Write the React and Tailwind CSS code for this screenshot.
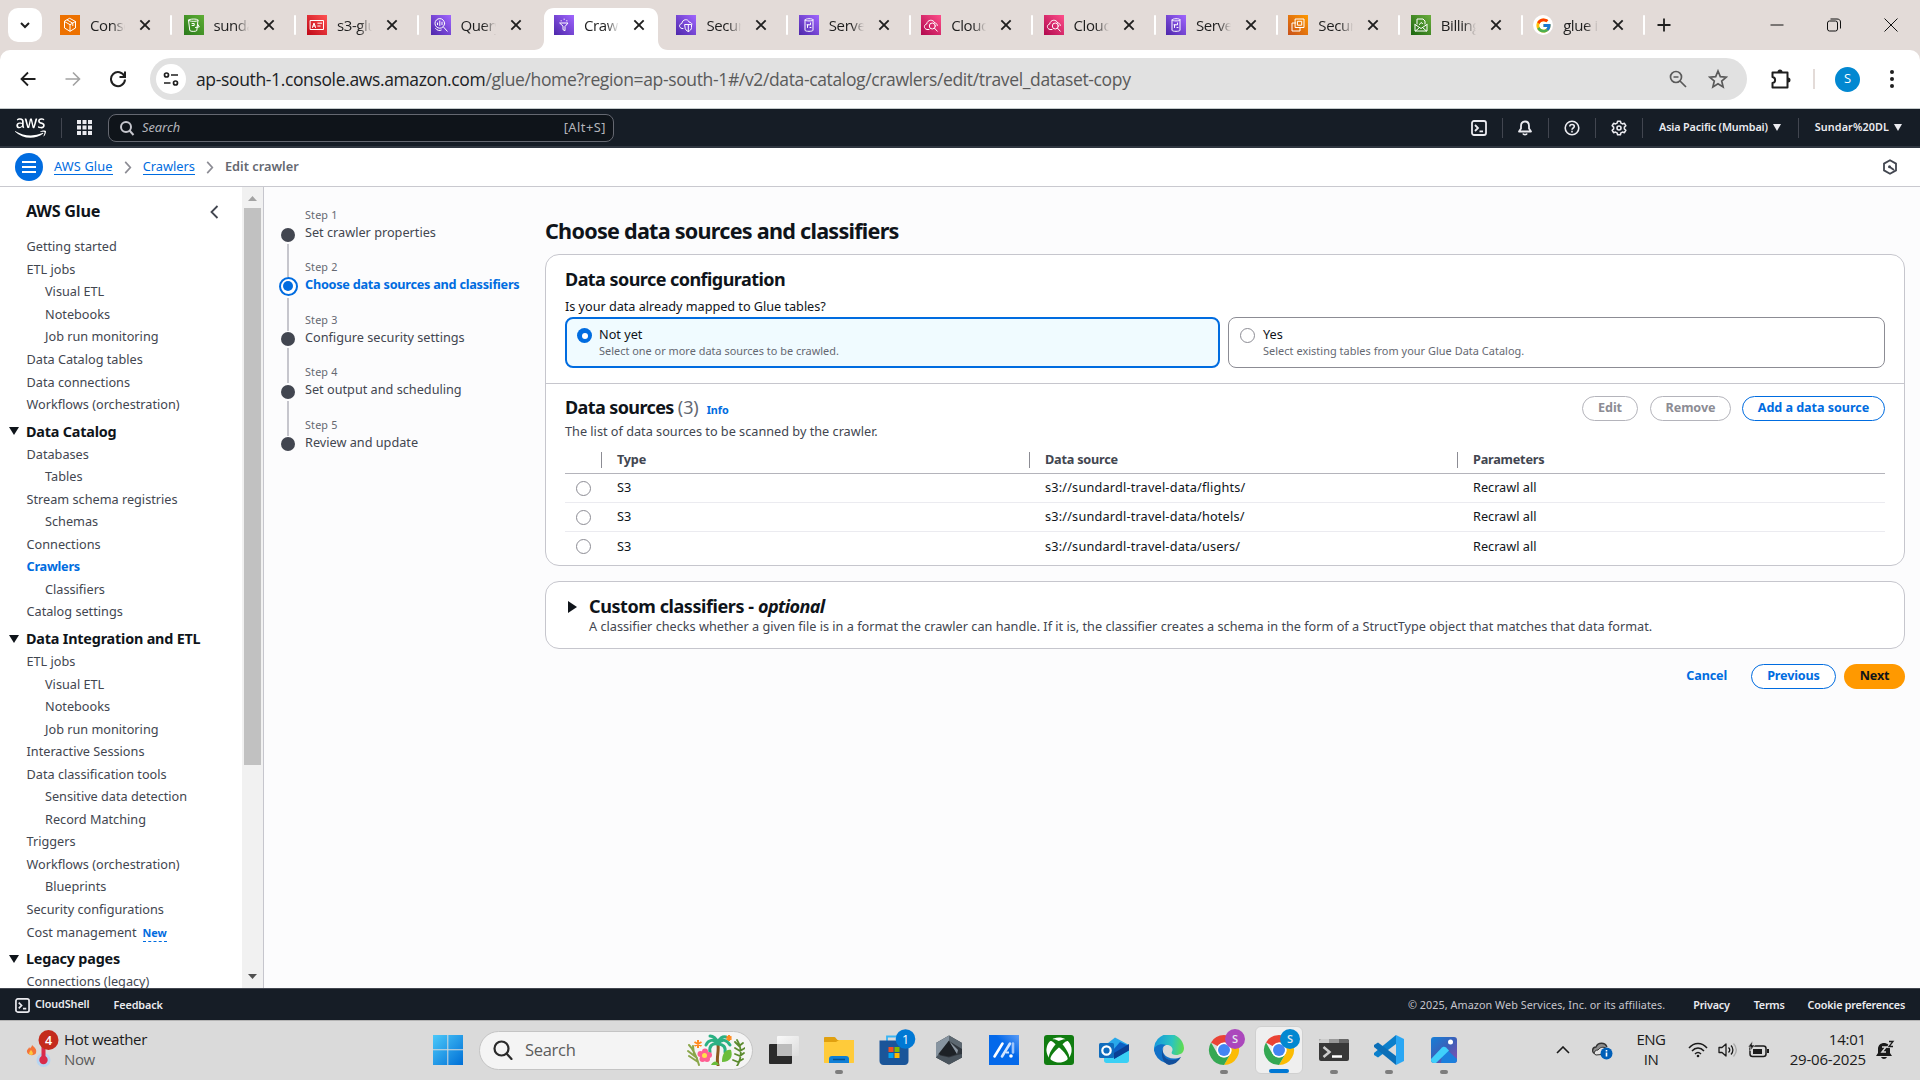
import React from 'react';
import { FaAws, FaXbox } from 'react-icons/fa';
import { FcGoogle } from 'react-icons/fc';

const favs = {
  console: ['#ed7100', '#ed7100', <path key="a" d="M10 3.5 15.5 6.5V13L10 16.3 4.5 13V6.5ZM4.5 6.5 10 9.7 15.5 6.5M10 9.7V16M7.2 5l5.6 3.2v2.5" />],
  bucket: ['#2a7a1b', '#5fae35', <path key="a" d="M4.5 5.2C4.5 3.6 14 3.6 14 5.2S4.5 6.8 4.5 5.2ZM4.5 5.2 5.8 15.5c.5 1.2 6.4 1.2 7 0L14 5.2M8 8.5h2.2v2H8M11.5 12.5l3.8-.6-1.4-2.4" />],
  s3glue: ['#bf0816', '#ff5252', <path key="a" d="M3.5 5.5h13v9h-13ZM5.5 12.5 7 8l1.5 4.5M6 11h2M10.8 8.2h3.8M10.8 11h2.3" />],
  athena: ['#4d27aa', '#a166ff', <g key="a"><circle cx="8.8" cy="8.4" r="4.8" /><path d="M6.5 9.7V8M8.8 10.5V6M11 9.7V7.2M12.5 12l3.7 4.2M4.6 13.5c1.6 2.2 4 2.4 5.6 1.6" /></g>],
  glue: ['#4d27aa', '#a166ff', <g key="a"><path d="M6 8h8l-3 3.500v4.200l-2-1v-3.200ZM7 5.800h.4M10 4.200h.4M12.600 5.800h.4" /></g>],
  lake: ['#4d27aa', '#a166ff', <path key="a" d="M7 13.5H6c-3.4-.8-3-4.6-.2-5C6.500 4 12 3.400 13.200 7.200c1.500.100 2.500.800 2.800 1.800M9 9.500h6.500v3c0 2-1.500 3.200-3.200 4-1.800-.8-3.300-2-3.300-4ZM12.300 9.500v7" />],
  redshift: ['#4d27aa', '#a166ff', <path key="a" d="M6 4.800C6 3.300 14 3.300 14 4.800S6 6.300 6 4.800V15.200c0 1.500 8 1.500 8 0V4.800M8.500 12.500V9.800h3V8M8 9.800h1M11 12.500h1" />],
  watch: ['#b0084d', '#ff4f8b', <g key="a"><path d="M8 14.500H6c-3.600-.8-3.200-5-.3-5.500.7-4.600 6.600-5 8-1 1.500 0 2.600 1 2.600 2.500" /><circle cx="11.300" cy="11" r="3" /><path d="m13.500 13.200 2.800 3" /></g>],
  ec2: ['#c8511b', '#ff9900', <path key="a" d="M7.500 4h8.500v8.500H7.500ZM9.800 6.300h3.900v3.900H9.800ZM7.500 8H4v8h8v-3.500" />],
  billing: ['#1b660f', '#6cae3e', <path key="a" d="M6 9V4h6l2 2v3M4 9.500V16h12V9.500M4 9.500l6 4 6-4M4.500 16 8.500 12.500M15.500 16l-4-3.500M8.500 9.500 10 7.500l1.500 1" />],
};

function Fav({ k }) {
  if (k === 'google') return <span className="flex size-5 shrink-0 items-center justify-center rounded-full bg-white"><FcGoogle size={17} /></span>;
  const [a, b, g] = favs[k];
  return (
    <svg viewBox="0 0 20 20" className="size-5 shrink-0">
      <defs><linearGradient id={'g' + k} x1="0" y1="1" x2="1" y2="0"><stop stopColor={a} /><stop offset="1" stopColor={b} /></linearGradient></defs>
      <rect width="20" height="20" fill={`url(#g${k})`} />
      <g fill="none" stroke="#fff" strokeWidth="1" strokeLinejoin="round" strokeLinecap="round">{g}</g>
    </svg>
  );
}

const tabs = [
  ['console', 'Conso'], ['bucket', 'sunda'], ['s3glue', 's3-glu'], ['athena', 'Query'], ['glue', 'Crawl'],
  ['lake', 'Secur'], ['redshift', 'Serve'], ['watch', 'Cloud'], ['watch', 'Cloud'], ['redshift', 'Serve'],
  ['ec2', 'Secur'], ['billing', 'Billing'], ['google', 'glue i'],
];

function Tab({ k, label, i }) {
  const active = i === 4;
  return (
    <div className={'relative flex h-[42px] shrink-0 items-center pl-[10px] ' + (i < 4 ? 'w-[123.5px]' : 'w-[122.4px]')}>
      {active && (
        <svg className="absolute -left-2.5 top-0 h-[42px] w-[134px]" viewBox="0 0 134 42">
          <path d="M0 42C6 42 10 38 10 32V10C10 4 14 0 20 0h94c6 0 10 4 10 10v22c0 6 4 10 10 10Z" fill="#fff" />
        </svg>
      )}
      <div className="relative flex h-[34px] items-center self-start">
        <Fav k={k} />
        <span className="ml-2.5 block w-[37px] overflow-hidden whitespace-nowrap text-[15px] tracking-[-0.4px] text-[#1f1f1f] [mask-image:linear-gradient(to_right,#000_60%,transparent_95%)]">{label}</span>
        <svg viewBox="0 0 12 12" className="ml-[11px] size-3.5"><path d="m2 2 8 8M10 2l-8 8" stroke="#1f1f1f" strokeWidth="1.600" /></svg>
      </div>
      {i !== 3 && !active && <span className="absolute left-[120px] top-[7px] h-5 w-[2px] rounded bg-white" />}
    </div>
  );
}

function Chrome() {
  return (
    <header className="bg-[#e3dbd8] font-['Open_Sans',sans-serif]">
      <div className="flex h-[50px] items-end">
        <button className="mb-[8px] ml-2 flex h-[34px] w-[34px] items-center justify-center rounded-[10px] bg-white">
          <svg viewBox="0 0 14 14" className="size-3.5"><path d="m3 5 4 4 4-4" fill="none" stroke="#1f1f1f" strokeWidth="2" /></svg>
        </button>
        <div className="ml-2 flex">
          {tabs.map(([k, l], i) => <Tab key={i} k={k} label={l} i={i} />)}
        </div>
        <svg viewBox="0 0 14 14" className="mb-[18px] ml-[11px] size-3.5"><path d="M7 .5v13M.5 7h13" stroke="#1f1f1f" strokeWidth="1.800" /></svg>
        <div className="mb-[18px] ml-auto flex items-center gap-[43px] pr-[22px]">
          <svg viewBox="0 0 14 14" className="size-3.5"><path d="M.5 7h13" stroke="#111" /></svg>
          <svg viewBox="0 0 14 14" className="size-3.5" fill="none" stroke="#111"><rect x=".5" y="3" width="10" height="10" rx="2" /><path d="M3.500 1h6.500c2 0 3.500 1 3.500 3v6.500" /></svg>
          <svg viewBox="0 0 14 14" className="size-3.5"><path d="m.5.5 13 13M13.500.5l-13 13" stroke="#111" /></svg>
        </div>
      </div>
      <div className="flex h-[59px] items-center rounded-t-[10px] border-b border-[#c4cacb] bg-white">
        <svg viewBox="0 0 16 16" className="ml-[20px] size-4" fill="none" stroke="#1f1f1f" strokeWidth="1.800"><path d="M15.500 8H2M8 1.500 1.500 8 8 14.500" /></svg>
        <svg viewBox="0 0 16 16" className="ml-[29px] size-4" fill="none" stroke="#a2a2a2" strokeWidth="1.600"><path d="M.5 8H14M8 1.500 14.500 8 8 14.500" /></svg>
        <svg viewBox="0 0 18 18" className="ml-[28px] size-[18px]" fill="none" stroke="#1f1f1f" strokeWidth="2"><path d="M15.500 6.500A7 7 0 1 0 16 9.500" /><path d="M16 1.500V7h-5.500" /></svg>
        <div className="ml-[23px] flex h-[42px] w-[1597px] items-center rounded-full bg-[#e1e1e1] pl-1.5">
          <span className="flex size-[30px] items-center justify-center rounded-full bg-white">
            <svg viewBox="0 0 16 16" className="size-4" fill="none" stroke="#1f1f1f" strokeWidth="1.700"><circle cx="3.500" cy="4" r="2" /><path d="M8 4h7M1 12h6.500" /><circle cx="12.500" cy="12" r="2" /></svg>
          </span>
          <span className="ml-[10px] whitespace-nowrap text-[17.500px] tracking-[-0.36px] text-[#5a5a5a]"><span className="text-[#202124]">ap-south-1.console.aws.amazon.com</span>/glue/home?region=ap-south-1#/v2/data-catalog/crawlers/edit/travel_dataset-copy</span>
          <svg viewBox="0 0 18 18" className="ml-auto size-[18px]" fill="none" stroke="#5a5a5a" strokeWidth="1.700"><circle cx="7" cy="7" r="5.500" /><path d="m11 11 6 6M4.500 7h5" /></svg>
          <svg viewBox="0 0 20 20" className="ml-[21px] mr-[19px] size-5" fill="none" stroke="#5a5a5a" strokeWidth="1.700"><path d="m10 2 2.300 5.600 6 .5-4.600 3.900 1.400 5.900L10 14.700 4.900 17.900 6.300 12 1.700 8.100l6-.5Z" /></svg>
        </div>
        <svg viewBox="0 0 22 22" className="ml-[23px] size-[22px]" fill="none" stroke="#1f1f1f" strokeWidth="2"><path d="M2.500 4.500H17.500V19.500H2.500V15c3.500-.5 3.500-5.500 0-6Z" strokeLinejoin="round" /><path d="M7.500 4a2.500 2.500 0 0 1 5 0ZM18 9.500a2.500 2.500 0 0 1 0 5Z" fill="#1f1f1f" stroke="none" /></svg>
        <span className="ml-[21px] h-5 w-[2px] bg-[#e3dbd8]" />
        <span className="ml-[20px] flex size-[25px] items-center justify-center rounded-full bg-[#0288d1] text-[13px] text-white">S</span>
        <svg viewBox="0 0 4 18" className="ml-[30px] h-[18px] w-1" fill="#1f1f1f"><circle cx="2" cy="2" r="2" /><circle cx="2" cy="9" r="2" /><circle cx="2" cy="16" r="2" /></svg>
      </div>
    </header>
  );
}

function ShellIcon({ className }) {
  return <svg viewBox="0 0 16 16" className={className} fill="none" stroke="currentColor" strokeWidth="1.800"><rect x="1" y="1" width="14" height="14" rx="2" /><path d="m4 5 3 3-3 3M8.500 11.300H12" /></svg>;
}
const Bar = ({ className }) => <span className={'h-5 w-px bg-[#424650] ' + className} />;
const Caret = ({ className }) => <svg viewBox="0 0 8 7" className={'h-[7px] w-2 ' + className} fill="currentColor"><path d="M0 0h8L4 7Z" /></svg>;

function AwsNav() {
  return (
    <nav className="flex h-[39px] items-center border-b-2 border-[#2f3640] bg-[#161d26] text-[#ebebf0]">
      <FaAws className="ml-[15px] h-[26px] w-[31px] text-white" preserveAspectRatio="none" />
      <Bar className="ml-[15px]" />
      <svg viewBox="0 0 15 15" className="ml-[15px] size-[15px]" fill="currentColor">
        {[0, 5.500, 11].map((y) => [0, 5.500, 11].map((x) => <rect key={x + '-' + y} x={x} y={y} width="4" height="4" />))}
      </svg>
      <div className="ml-4 flex h-[28px] w-[506px] items-center rounded-lg border border-[#656871] bg-[#0f141a] px-[10px]">
        <svg viewBox="0 0 16 16" className="size-4" fill="none" stroke="#c6c6cd" strokeWidth="2"><circle cx="7" cy="7" r="5" /><path d="m10.500 10.500 4 4.500" /></svg>
        <span className="ml-[7px] pt-px text-[12.800px] italic tracking-[0px] text-[#b4b4bb]">Search</span>
        <span className="-mr-[3px] ml-auto pt-px text-[12.800px] tracking-[0.5px] text-[#b4b4bb]">[Alt+S]</span>
      </div>
      <ShellIcon className="ml-auto size-4" />
      <Bar className="ml-[15px]" />
      <svg viewBox="0 0 16 16" className="ml-[14px] size-4" fill="none" stroke="currentColor" strokeWidth="1.800"><path d="M8 1.500c3 0 4 2 4 4.500v2.500l2 3H2l2-3V6c0-2.500 1-4.500 4-4.500Z" strokeLinejoin="round" /><path d="M6 13.500c.5 1.500 3.500 1.500 4 0" /></svg>
      <Bar className="ml-[15px]" />
      <svg viewBox="0 0 16 16" className="ml-[15px] size-4" fill="none" stroke="currentColor" strokeWidth="1.600"><circle cx="8" cy="8" r="6.800" /><path d="M5.800 6.500C5.800 3.700 10.300 3.900 10.300 6.500 10.300 8 8 8 8 9.800M8 10.800v1.600" /></svg>
      <Bar className="ml-[15px]" />
      <svg viewBox="0 0 16 16" className="ml-[15px] size-4" fill="none" stroke="currentColor" strokeWidth="1.600"><path d="M6.600 1.200h2.800l.5 1.900 1.600.8 1.900-.6 1.400 2.400-1.400 1.400v1.800l1.400 1.400-1.400 2.400-1.900-.6-1.600.8-.5 1.900H6.600l-.5-1.900-1.600-.8-1.900.6-1.400-2.400L2.600 8.900V7.100L1.200 5.700l1.400-2.400 1.900.6 1.600-.8Z" strokeLinejoin="round" /><circle cx="8" cy="8" r="2" /></svg>
      <Bar className="ml-[15px]" />
      <span className="ml-4 text-[10.800px] font-semibold tracking-[-0.15px]">Asia Pacific (Mumbai)</span>
      <Caret className="ml-[5px]" />
      <Bar className="ml-[17px]" />
      <span className="ml-4 text-[10.800px] font-semibold tracking-[0.1px]">Sundar%20DL</span>
      <Caret className="ml-[5px] mr-[18px]" />
    </nav>
  );
}

const Chev = ({ className }) => <svg viewBox="0 0 8 14" className={'h-[13px] w-2 ' + className} fill="none" stroke="#8c8c94" strokeWidth="1.800"><path d="m1 1 5.500 6L1 13" /></svg>;

function Crumbs() {
  return (
    <div className="flex h-[39px] items-center border-b border-[#c9c9cf] bg-white text-[12.800px]">
      <span className="ml-[15px] flex size-7 items-center justify-center rounded-full bg-[#006ce0]">
        <svg viewBox="0 0 14 12" className="h-3 w-3.5" stroke="#fff" strokeWidth="1.800"><path d="M0 1h14M0 6h14M0 11h14" /></svg>
      </span>
      <a className="-mt-[2px] ml-[11px] border-b border-[#006ce0] leading-[16px] tracking-[0.12px] text-[#006ce0]">AWS Glue</a>
      <Chev className="ml-[11px]" />
      <a className="-mt-[2px] ml-[11px] border-b border-[#006ce0] leading-[16px] text-[#006ce0]">Crawlers</a>
      <Chev className="ml-[11px]" />
      <span className="-mt-[1px] ml-[11px] font-semibold text-[#656871]">Edit crawler</span>
      <svg viewBox="0 0 16 16" className="ml-auto mr-[22px] size-4" fill="none" stroke="#424650" strokeWidth="1.800"><path d="m8 1.200 6 3.400v6.800l-6 3.400-6-3.400V4.600Z" /><path d="M7.500 7.800 12 11" /><circle cx="7.500" cy="7.800" r="1.500" fill="#424650" stroke="none" /></svg>
    </div>
  );
}

const nav = [
  [0, 'Getting started'], [0, 'ETL jobs'], [1, 'Visual ETL'], [1, 'Notebooks'], [1, 'Job run monitoring'],
  [0, 'Data Catalog tables'], [0, 'Data connections'], [0, 'Workflows (orchestration)'],
  [2, 'Data Catalog'], [0, 'Databases'], [1, 'Tables'], [0, 'Stream schema registries'], [1, 'Schemas'], [0, 'Connections'],
  [3, 'Crawlers'], [1, 'Classifiers'], [0, 'Catalog settings'],
  [2, 'Data Integration and ETL'], [0, 'ETL jobs'], [1, 'Visual ETL'], [1, 'Notebooks'], [1, 'Job run monitoring'],
  [0, 'Interactive Sessions'], [0, 'Data classification tools'], [1, 'Sensitive data detection'], [1, 'Record Matching'],
  [0, 'Triggers'], [0, 'Workflows (orchestration)'], [1, 'Blueprints'], [0, 'Security configurations'], [0, 'Cost management'],
  [2, 'Legacy pages'], [0, 'Connections (legacy)'],
];

function Sidebar() {
  return (
    <aside className="flex w-[264px] shrink-0 border-r border-[#c6c6cd] bg-white">
      <div className="flex-1 overflow-hidden whitespace-nowrap">
        <div className="flex h-[48.500px] items-center justify-between pl-[26px] pr-[23px]">
          <span className="text-[16.200px] font-bold tracking-[-0.25px] text-[#0f141a]">AWS Glue</span>
          <svg viewBox="0 0 9 14" className="mt-0.5 h-[14px] w-[9px]" fill="none" stroke="#424650" strokeWidth="1.800"><path d="M7.500 1 1.500 7l6 6" /></svg>
        </div>
        {nav.map(([t, l], i) => t === 2 ? (
          <div key={i} className="mt-1 flex h-[23px] items-center pl-[9px] text-[14.400px] font-bold tracking-[-0.2px] text-[#0f141a]">
            <svg viewBox="0 0 10 8" className="mr-[7px] h-2 w-2.5" fill="#0f141a"><path d="M0 0h10L5 8Z" /></svg>{l}
          </div>
        ) : (
          <div key={i} className={'flex h-[22.550px] items-center text-[12.700px] ' + (t === 1 ? 'pl-[45px] text-[#424650]' : t === 3 ? 'pl-[26.500px] font-bold tracking-[-0.25px] text-[#006ce0]' : 'pl-[26.500px] text-[#424650]')}>
            {l}
            {l === 'Cost management' && <span className="ml-[6px] mt-0.5 border-b border-dashed border-[#006ce0] text-[10.800px] font-bold leading-[16px] text-[#006ce0]">New</span>}
          </div>
        ))}
      </div>
      <div className="flex w-[21px] flex-col items-center bg-[#f1f1f1]">
        <svg viewBox="0 0 9 5" className="mt-[9px] h-[5px] w-[9px] shrink-0"><path d="M0 5h9L4.500 0Z" fill="#a3a3a3" /></svg>
        <div className="mt-[7px] h-[557px] w-[17px] shrink-0 bg-[#c1c1c1]" />
        <svg viewBox="0 0 9 5" className="mb-[9px] mt-auto h-[5px] w-[9px] shrink-0"><path d="M0 0h9L4.500 5Z" fill="#505050" /></svg>
      </div>
    </aside>
  );
}

const steps = ['Set crawler properties', 'Choose data sources and classifiers', 'Configure security settings', 'Set output and scheduling', 'Review and update'];

function Steps() {
  return (
    <ol className="w-[281px] shrink-0 pl-[14px] pt-[19px]">
      {steps.map((s, i) => (
        <li key={s} className="flex h-[52.400px]">
          <div className="flex w-5 flex-col items-center pt-[21.500px]">
            {i === 1
              ? <span className="z-10 -mt-[3px] flex size-[19px] shrink-0 items-center justify-center rounded-full border-2 border-[#006ce0] bg-white"><span className="size-[10px] rounded-full bg-[#006ce0]" /></span>
              : <span className="size-[14px] shrink-0 rounded-full bg-[#424650]" />}
            {i < 4 && <span className={'mt-[2px] w-[2px] shrink-0 bg-[#c6c6cd] ' + (i < 2 ? 'h-[33px]' : 'h-[35px]')} />}
          </div>
          <div className="ml-[7px] whitespace-nowrap">
            <div className="h-[17px] text-[10.800px] leading-[17px] tracking-[0.15px] text-[#656871]">Step {i + 1}</div>
            <div className={'text-[12.700px] leading-[18px] ' + (i === 1 ? 'font-bold tracking-[-0.25px] text-[#006ce0]' : 'text-[#424650]')}>{s}</div>
          </div>
        </li>
      ))}
    </ol>
  );
}

const rows = ['flights', 'hotels', 'users'];
const Radio = ({ className }) => <span className={'block size-[15px] shrink-0 rounded-full border border-[#8c8c94] bg-white ' + className} />;

function Main() {
  return (
    <main className="w-[1360px] whitespace-nowrap text-[12.700px] text-[#0f141a]">
      <h1 className="h-[67px] pt-[29px] text-[21.600px] font-bold leading-[30px] tracking-[-0.75px]">Choose data sources and classifiers</h1>
      <section className="h-[312px] rounded-[14px] border border-[#c6c6cd] bg-white">
        <div className="h-[129px] border-b border-[#c6c6cd] px-[19px] pt-[12px]">
          <h2 className="text-[18px] font-bold leading-[24px] tracking-[-0.55px]">Data source configuration</h2>
          <p className="mt-[6px] leading-[18px] tracking-[-0.03px]">Is your data already mapped to Glue tables?</p>
          <div className="mt-[2px] flex gap-[8px]">
            <label className="flex h-[51px] w-[655px] rounded-lg border-2 border-[#006ce0] bg-[#f0fbff] pl-[10px] pt-[7px]">
              <span className="mt-[2px] flex size-[15px] shrink-0 items-center justify-center rounded-full bg-[#006ce0]"><span className="size-[6px] rounded-full bg-white" /></span>
              <span className="ml-[7px]"><span className="block leading-[17px]">Not yet</span><span className="block text-[10.900px] leading-[16px] tracking-[0.02px] text-[#656871]">Select one or more data sources to be crawled.</span></span>
            </label>
            <label className="flex h-[51px] flex-1 rounded-lg border border-[#8c8c94] bg-white pl-[11px] pt-[8px]">
              <Radio className="mt-[2px]" />
              <span className="ml-[8px]"><span className="block leading-[17px]">Yes</span><span className="block text-[10.900px] leading-[16px] tracking-[0.05px] text-[#656871]">Select existing tables from your Glue Data Catalog.</span></span>
            </label>
          </div>
        </div>
        <div className="px-[19px]">
          <div className="mt-[12px] flex h-[25px] items-center">
            <h2 className="-mt-[2px] text-[18px] font-bold tracking-[-0.6px]">Data sources <span className="font-normal tracking-[-0.1px] text-[#656871]">(3)</span></h2>
            <a className="ml-[8px] mt-[4px] text-[10.800px] font-bold text-[#006ce0]">Info</a>
            <div className="ml-auto flex text-[12.600px] font-bold leading-[22px] tracking-[-0.05px]">
              <button className="h-[25px] w-[56px] rounded-full border border-[#b4b4bb] pb-[2px] leading-[21px] text-[#8c8c94]">Edit</button>
              <button className="ml-[12px] h-[25px] w-[81px] rounded-full border border-[#b4b4bb] pb-[2px] leading-[21px] text-[#8c8c94]">Remove</button>
              <button className="ml-[11px] h-[25px] w-[143px] rounded-full border border-[#006ce0] pb-[2px] leading-[21px] text-[#006ce0]">Add a data source</button>
            </div>
          </div>
          <p className="mt-[1px] leading-[18px] text-[#424650]">The list of data sources to be scanned by the crawler.</p>
          <div className="mt-[6px] grid h-[28px] grid-cols-[36px_428px_428px_1fr] items-center border-b border-[#b4b4bb] font-bold tracking-[-0.22px] text-[#424650]">
            <span />
            {['Type', 'Data source', 'Parameters'].map((h) => <span key={h} className="h-4 border-l border-[#8c8c94] pl-[15px] leading-[14px]">{h}</span>)}
          </div>
          {rows.map((r, i) => (
            <div key={r} className={'grid h-[29px] grid-cols-[36px_428px_428px_1fr] items-center ' + (i < 2 ? 'border-b border-[#ebebf0]' : '')}>
              <Radio className="ml-[11px]" />
              <span className="pl-4">S3</span>
              <span className="pl-4 tracking-[0.19px]">s3://sundardl-travel-data/{r}/</span>
              <span className="pl-4">Recrawl all</span>
            </div>
          ))}
        </div>
      </section>
      <section className="mt-[15px] flex h-[68px] rounded-[14px] border border-[#c6c6cd] bg-white pl-[22px]">
        <svg viewBox="0 0 9 12" className="mt-[19px] h-3 w-[9px]" fill="#0f141a"><path d="M0 0v12L9 6Z" /></svg>
        <div className="ml-[12px] pt-[12px]">
          <h2 className="text-[18px] font-bold leading-[24px] tracking-[-0.42px]">Custom classifiers - <em className="tracking-[-0.6px]">optional</em></h2>
          <p className="-mt-[1px] leading-[18px] text-[#424650]">A classifier checks whether a given file is in a format the crawler can handle. If it is, the classifier creates a schema in the form of a StructType object that matches that data format.</p>
        </div>
      </section>
      <div className="mt-[15px] flex justify-end text-[12.600px] font-bold leading-[21px] tracking-[-0.15px]">
        <button className="mr-[24px] h-[25px] pb-[2px] text-[#006ce0]">Cancel</button>
        <button className="h-[25px] w-[85px] rounded-full border border-[#006ce0] bg-white pb-[2px] text-[#006ce0]">Previous</button>
        <button className="ml-[8px] h-[25px] w-[61px] rounded-full bg-[#ff9900] pb-[2px] text-[#0f141a]">Next</button>
      </div>
    </main>
  );
}

function Footer() {
  return (
    <footer className="flex h-8 items-center border-t border-[#424650] bg-[#161d26] pt-[2px] text-[10.800px] font-semibold tracking-[-0.22px] text-[#ebebf0]">
      <ShellIcon className="ml-[15px] size-[15px]" />
      <span className="-mt-[2px] ml-[5px] tracking-[-0.1px]">CloudShell</span>
      <span className="ml-[24px] tracking-[-0.1px]">Feedback</span>
      <span className="ml-auto font-normal tracking-[0.06px] text-[#c6c6cd]">© 2025, Amazon Web Services, Inc. or its affiliates.</span>
      <span className="ml-[28px]">Privacy</span>
      <span className="ml-[24px]">Terms</span>
      <span className="ml-[23px] mr-[15px]">Cookie preferences</span>
    </footer>
  );
}

function ChromeLogo({ badge }) {
  return (
    <svg viewBox="0 0 40 40" className="size-10 overflow-visible">
      <path d="M20 5a15 15 0 0 1 13 7.500H20L13.500 16 7 12.500A15 15 0 0 1 20 5Z" fill="#ea4335" />
      <path d="M33 12.500A15 15 0 0 1 20 35l6.500-11.200A7.500 7.500 0 0 0 20 12.500Z" fill="#fbbc04" />
      <path d="M7 12.500 13.500 23.800A7.500 7.500 0 0 0 26.500 23.800L20 35A15 15 0 0 1 7 12.500Z" fill="#34a853" />
      <circle cx="20" cy="20" r="7.500" fill="#fff" /><circle cx="20" cy="20" r="6" fill="#4285f4" />
      <circle cx="31" cy="9" r="10" fill={badge} />
      <text x="31" y="13" textAnchor="middle" fontSize="11" fontWeight="600" fill="#e3e8ee">S</text>
    </svg>
  );
}

const apps = [
  { icon: <svg viewBox="0 0 30 30" className="size-[30px]"><defs><linearGradient id="tv" x1="0" y1="0" x2="1" y2="1"><stop stopColor="#fff" /><stop offset="1" stopColor="#ddd" /></linearGradient></defs><rect x="0" y="9" width="23" height="20" rx="1" fill="#2b2b2b" /><rect x="8" y="1" width="22" height="20" rx="1" fill="url(#tv)" opacity=".85" /><rect x="8" y="9" width="15" height="12" fill="#bcbcbc" /></svg> },
  { run: 1, icon: <svg viewBox="0 0 30 30" className="size-[30px]"><path d="M0 3c0-1 .5-1 1-1h9c2 0 2 2 3.500 3H29c1 0 1 1 1 2H0Z" fill="#e0a010" /><path d="M0 7h12l3-2h14c1 0 1 .5 1 1v21c0 1-.5 1-1 1H1c-.5 0-1 0-1-1Z" fill="#ffcb3a" /><path d="M5 28v-4c0-2 1-3 3-3h14c2 0 3 1 3 3v4Z" fill="#0f7fd6" /><path d="M9 24.500h12" stroke="#08508c" strokeWidth="1.500" /></svg> },
  { icon: <svg viewBox="0 0 30 30" className="size-[30px] overflow-visible"><path d="M8 6V1.500h13V6" fill="none" stroke="#39b4f3" strokeWidth="1.800" /><path d="M.5 5.500h29V26c0 2-1.500 4-4 4h-21c-2.500 0-4-2-4-4Z" fill="#1a5599" /><path d="M9.500 12h5v5h-5Z" fill="#f25022" /><path d="M15.500 12h5v5h-5Z" fill="#7fba00" /><path d="M9.500 18h5v5h-5Z" fill="#00a4ef" /><path d="M15.500 18h5v5h-5Z" fill="#ffb900" /><circle cx="26.500" cy="4" r="9.800" fill="#0078d4" /><text x="26.500" y="8.500" fontSize="12.500" textAnchor="middle" fill="#fff">1</text></svg> },
  { icon: <svg viewBox="0 0 30 30" className="size-[30px]"><path d="m15 0.500 13 7.500v14.500L15 29.500 2 22.500V8Z" fill="#30363d" /><path d="M15 .5V6L6 20l-4 2.500V8Z" fill="#8794a0" /><path d="m15 .5 13 7.500v6L15 6Z" fill="#5d6871" /><path d="M15 5.500 23 19l-8 2.500-11-2Z" fill="#1d2126" /><path d="m4 20 11 2.500 8-2.500 5-1v3.500l-13 7-13-7Z" fill="#4a545d" /><path d="M15 6v0l8 13 1-4Z" fill="#8b96a1" /></svg> },
  { icon: <svg viewBox="0 0 30 30" className="size-[30px]"><defs><linearGradient id="my" x1="0" y1="1" x2="1" y2="0"><stop offset=".6" stopColor="#0469ea" /><stop offset="1" stopColor="#5b9cf5" /></linearGradient></defs><rect width="30" height="30" fill="url(#my)" /><path d="m5.500 21.500 8-13" stroke="#fff" strokeWidth="2.600" strokeLinecap="round" /><path d="m13 21.500 8-13" stroke="#d3e5ff" strokeWidth="2.600" strokeLinecap="round" /><path d="M24 8.500v9" stroke="#9cc4fb" strokeWidth="2.600" strokeLinecap="round" /><path d="M17 17.500h3" stroke="#d3e5ff" strokeWidth="2" /><circle cx="22" cy="21" r="1.800" fill="#fff" /></svg> },
  { icon: <span className="flex size-[30px] items-center justify-center rounded-[3px] bg-[#107c10]"><FaXbox size={26} color="#fff" /></span> },
  { icon: <svg viewBox="0 0 30 30" className="size-[30px]"><path d="M4 12 16 2.500 30 10v4L16 21 4 15Z" fill="#28a8ea" /><path d="M5 16 30 11v14.500c0 1.500-1 2.500-2.500 2.500h-20C6 28 5 27 5 25.500Z" fill="#3ad0f5" /><path d="m14 15 7-8 9 4v4L15 24Z" fill="#0b5fc4" /><path d="m15 18 15-9v6.500L15 24Z" fill="#0a3f94" /><rect x="0" y="8" width="15" height="15" rx="1.500" fill="#0f6cbd" /><circle cx="7.500" cy="15.500" r="4.200" fill="none" stroke="#fff" strokeWidth="2.200" /></svg> },
  { icon: <svg viewBox="0 0 30 30" className="size-[30px]"><defs><linearGradient id="ed" x1="0" y1=".3" x2="1" y2=".4"><stop stopColor="#1596dd" /><stop offset=".6" stopColor="#2bc4c0" /><stop offset="1" stopColor="#5fdc4f" /></linearGradient></defs><path d="M0 15A15 15 0 0 1 30 13c0 5-4 7-8 7s-5-1.500-4-3.500c2-4-2-7-6-6.500S2 13 0 17Z" fill="url(#ed)" /><path d="M0 15c1-5 7-7 12-5-4 1-4 6-2 9 3 4.500 10 6 17 3A15 15 0 0 1 0 15Z" fill="#1170c8" /><path d="M10 12c-3 5 0 14 9 13 4 0 6-1.500 8-3A15 15 0 0 1 15 30C8 28 6 18 10 12Z" fill="#124f9c" /></svg> },
  { run: 1, icon: <ChromeLogo badge="#ab47bc" /> },
  { run: 2, icon: <ChromeLogo badge="#0288d1" /> },
  { run: 1, icon: <svg viewBox="0 0 30 30" className="size-[30px]"><rect y="4" width="30" height="22" rx="2" fill="#383838" /><path d="M0 8V6c0-1 1-2 2-2h8v4Z" fill="#ccc" /><path d="M10 4h10v4H10Z" fill="#999" /><path d="M20 4h8c1 0 2 1 2 2v2H20Z" fill="#666" /><path d="m4.500 12 6 5-6 5" fill="none" stroke="#ccc" strokeWidth="2.500" /><path d="M13 21.500h10" stroke="#fff" strokeWidth="2.500" /></svg> },
  { run: 1, icon: <svg viewBox="0 0 30 30" className="size-[30px]"><path d="M22 0v9L4 22.500 0 20v-2Z" fill="#0b7fcb" /><path d="M22 30v-9L4 7.500 0 10v2Z" fill="#0b6fb8" /><path d="M22 0 30 4v22l-8 4Z" fill="#2aa7f4" /></svg> },
  { run: 1, icon: <svg viewBox="0 0 30 30" className="size-[30px]"><defs><linearGradient id="ph" x1="0" y1="0" x2="1" y2="1"><stop stopColor="#1580d8" /><stop offset=".5" stopColor="#3b5fb8" /><stop offset="1" stopColor="#8a4fb0" /></linearGradient><clipPath id="pc"><rect x="2" y="2" width="26" height="26" rx="3" /></clipPath></defs><g clipPath="url(#pc)"><rect x="2" y="2" width="26" height="26" fill="url(#ph)" /><path d="M14 11 28 24v4H12Z" fill="#1b7fdc" /><path d="M2 24 13 12.500c1-1 3-1 4 0L20 15.500 7 28H2Z" fill="#3fd0fb" /></g><circle cx="21.500" cy="7" r="2.500" fill="#fff" /></svg> },
];

function Jungle() {
  return (
    <svg viewBox="0 0 58 32" className="h-8 w-[58px]">
      <g fill="none" strokeLinecap="round"><path d="M2 11c6 6 8 13 10 20M1 17l9 7M2 22l9 6M6 12l1 8" stroke="#8aa64a" strokeWidth="2" /><path d="M50 32c5-8 5-18 0-26M48 8l4 4 4-3M48 14l5 3 5-3M48 20l5 2 4-3M46 26l5 2 5-3" stroke="#5b8a2e" strokeWidth="1.800" /><path d="M31 11c1 7-2 14 0 20" stroke="#8a5a1e" strokeWidth="3" /><path d="M31 10C27 4 21 6 19 11M31 10c-6-1-9 2-8 8M31 10c4-6 9-4 12 1M31 10c5 0 8 3 7 8M31 9c-2-5-5-7-8-7M31 9c1-5 5-7 8-6" stroke="#2bb183" strokeWidth="3" /></g>
      <g fill="#ff5f93"><circle cx="18" cy="17.500" r="3" /><circle cx="13.500" cy="20" r="3" /><circle cx="22" cy="21" r="3" /><circle cx="15.500" cy="25" r="3" /><circle cx="20" cy="25" r="3" /></g><circle cx="17.500" cy="21.500" r="2.500" fill="#ffe04a" />
      <path d="M35 28c0-9 4-13 9-12 2 6 0 12-9 12ZM32 31c-2-5-6-4-8 0Z" fill="#6bbd3a" />
      <g stroke="#ff8a1e" strokeWidth="2"><path d="M11 6v8M7.500 8l7 4M14.500 8l-7 4M42 1v6M39.500 2.500l5 3M44.500 2.500l-5 3" /></g>
    </svg>
  );
}

function Taskbar() {
  return (
    <div className="flex h-[60px] items-center border-t border-[#b4b4b4] bg-[#dadada] pb-[1px] font-['Open_Sans',sans-serif] text-[15px] text-[#1b1b1b]">
      <div className="flex w-[433px] items-center pl-[26px]">
        <svg viewBox="0 0 34 38" className="h-[38px] w-[34px] overflow-visible">
          <path d="M6 14c3 3 5 4 4 8-1 3-8 3-9-1-.5-3 2-3 2-5l1 1.500C5 16 6 15.500 6 14Z" fill="#f4743b" /><path d="M5 19c2 2 3 5 0 5s-2-3 0-5Z" fill="#ffc83d" />
          <circle cx="17.500" cy="29" r="7" fill="#b6d5f2" /><path d="M17.500 12v16" stroke="#d92b4b" strokeWidth="4" /><circle cx="17.500" cy="29" r="4.200" fill="#d92b4b" />
          <circle cx="22.500" cy="9" r="10" fill="#c42b1c" /><text x="22.500" y="13.500" fontSize="12.500" fontWeight="600" fill="#fff" textAnchor="middle">4</text>
        </svg>
        <div className="-mt-[3px] ml-[4px] leading-5"><div className="tracking-[-0.35px]">Hot weather</div><div className="tracking-[-0.35px] text-[#5c5c5c]">Now</div></div>
      </div>
      <svg viewBox="0 0 30 30" className="size-[30px]"><defs><linearGradient id="w" x1="0" y1="0" x2="1" y2="1"><stop stopColor="#4cc9f9" /><stop offset="1" stopColor="#006fd6" /></linearGradient></defs><path d="M0 0h14.300v14.300H0ZM15.300 0H30v14.300H15.300ZM0 15.300h14.300V30H0ZM15.300 15.300H30V30H15.300Z" fill="url(#w)" /></svg>
      <div className="ml-[16px] flex h-[39px] w-[274px] items-center rounded-full border border-[#c4c4c4] bg-[#f4f4f4] pl-[13px]">
        <svg viewBox="0 0 20 20" className="size-5" fill="none" stroke="#2a2a2a" strokeWidth="2.200"><circle cx="8.500" cy="8.500" r="7" /><path d="m13.500 13.500 5 5.500" strokeLinecap="round" /></svg>
        <span className="ml-[12px] text-[16.500px] tracking-[-0.3px] text-[#5c5c5c]">Search</span>
        <span className="ml-auto mr-[7px]"><Jungle /></span>
      </div>
      <div className="ml-[3px] flex">
        {apps.map((a, i) => (
          <div key={i} className="flex h-[59px] w-[55px] items-center justify-center">
            <div className={'relative flex h-12 w-12 items-center justify-center ' + (a.run === 2 ? 'rounded-md border border-[#d0d0d0] bg-[#efefef]' : '')}>
              {a.icon}
              {a.run === 1 && <span className="absolute bottom-0 h-1 w-2 rounded-full bg-[#7d7d7d]" />}
              {a.run === 2 && <span className="absolute bottom-0 h-1 w-5 rounded-full bg-[#0078d4]" />}
            </div>
          </div>
        ))}
      </div>
      <div className="ml-auto flex items-center pr-[25px]">
        <svg viewBox="0 0 14 8" className="h-2 w-3.5" fill="none" stroke="#1b1b1b" strokeWidth="1.600"><path d="m1 7 6-6 6 6" /></svg>
        <svg viewBox="0 0 22 20" className="ml-[21px] h-5 w-[22px]"><path d="M5 14C0 13 1 7 5 7c2-5 9-5 11 0" fill="#8e8e8e" stroke="#333" strokeWidth="1.300" /><path d="M5 15C2 14 3 10 7 10c3-4 7-3 9-1v5Z" fill="#e4e4e4" stroke="#333" /><circle cx="15.500" cy="13.500" r="6" fill="#005fb8" /><path d="M15.500 12.500v4M15.500 10v1.500" stroke="#fff" strokeWidth="1.600" /></svg>
        <div className="-mt-[2px] ml-[22px] w-[32px] text-center leading-5 tracking-[-0.5px]">ENG<br />IN</div>
        <svg viewBox="0 0 20 16" className="ml-[21px] h-4 w-5" fill="none" stroke="#1b1b1b" strokeWidth="1.500"><path d="M1 6c5-6 13-6 18 0M4 9c3.500-4 8.500-4 12 0M7 12c2-2 4-2 6 0" /><circle cx="10" cy="14" r="1.300" fill="#1b1b1b" stroke="none" /></svg>
        <svg viewBox="0 0 20 16" className="ml-[10px] h-4 w-5" fill="none" stroke="#1b1b1b" strokeWidth="1.300"><path d="M1 5.500h3L8 2v12l-4-3.500H1Z" strokeLinejoin="round" /><path d="M10.500 5.500c1.500 1.500 1.500 3.500 0 5M13 3.500c2.500 2.500 2.500 6.500 0 9" /><path d="M15.500 1.500c3.500 4 3.500 9 0 13" stroke="#aaa" /></svg>
        <svg viewBox="0 0 22 18" className="ml-[10px] h-[18px] w-[22px]"><rect x="2" y="5" width="16" height="10.500" rx="2.500" fill="none" stroke="#1b1b1b" strokeWidth="1.500" /><path d="M5 8h9v5H5ZM19 8h2v4h-2Z" fill="#1b1b1b" /><path d="M4.500 0 0 6h3l-1 4 5-6H4Z" fill="#1b1b1b" stroke="#dadada" strokeWidth=".6" /></svg>
        <div className="-mt-[3px] ml-[17px] w-[79px] whitespace-nowrap text-right leading-5 tracking-[-0.2px]">14:01<br />29-06-2025</div>
        <svg viewBox="0 0 20 20" className="ml-[9px] size-5"><path d="M3 9c0-8 12-8 12 0v4l2 3H1l2-3ZM6 17h6c-1 2.500-5 2.500-6 0Z" fill="#1b1b1b" /><path d="M7 7h4l-4 5h4" fill="none" stroke="#dadada" strokeWidth="1.500" /><path d="M14 1.500h4l-4 5h4" fill="none" stroke="#dadada" strokeWidth="3" /><path d="M14 1.500h4l-4 5h4" fill="none" stroke="#1b1b1b" strokeWidth="1.300" /></svg>
      </div>
    </div>
  );
}

export default function App() {
  return (
    <div className="flex h-[1080px] w-[1920px] flex-col overflow-hidden bg-[#fcfcfd] font-['Noto_Sans',sans-serif]">
      <Chrome />
      <AwsNav />
      <Crumbs />
      <div className="flex min-h-0 flex-1 overflow-hidden">
        <Sidebar />
        <Steps />
        <Main />
      </div>
      <Footer />
      <Taskbar />
    </div>
  );
}
